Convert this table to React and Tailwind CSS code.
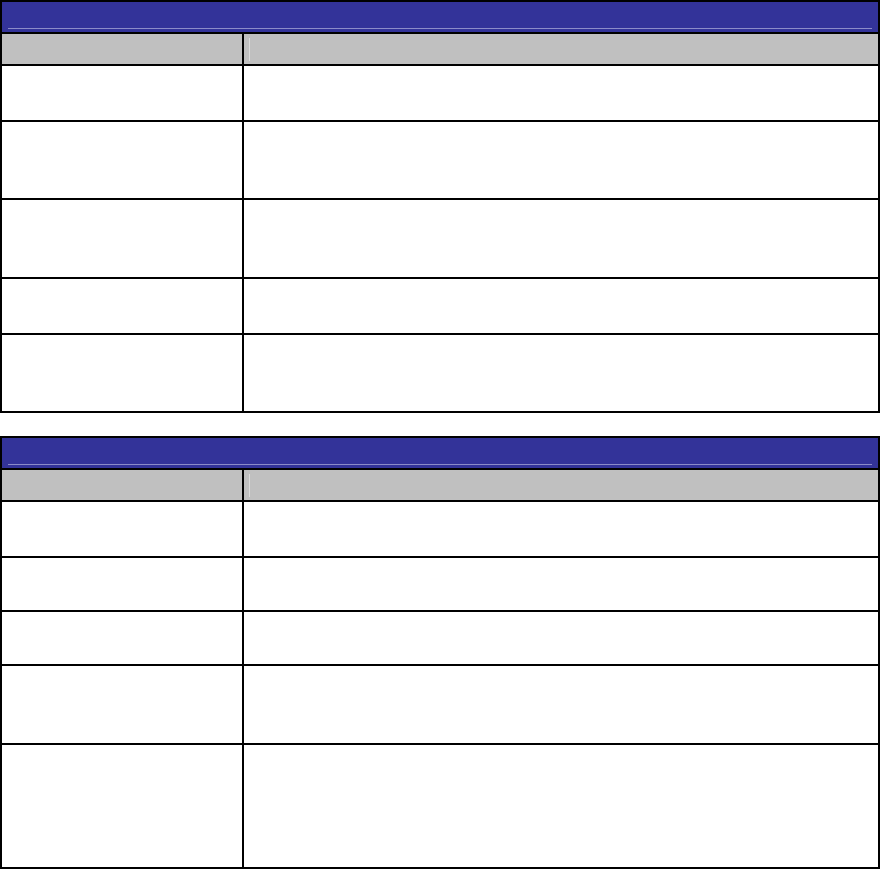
const tables = [
  { rows: [54, 76, 77, 54, 76] },
  { rows: [54, 52, 52, 77, 122] },
];

const Table = ({ rows }) => (
  <div className="border-2 border-black bg-white">
    {/* barra de título */}
    <div className="h-[30px] bg-[#333399] flex flex-col justify-end pb-[3px] px-[6px]">
      <div className="h-px bg-[#8c8cc8]" />
    </div>
    {/* cabecera de columnas */}
    <div className="flex h-[32px] border-t-2 border-black bg-[#c0c0c0]">
      <div className="w-[242px] border-r-2 border-black" />
      <div className="flex-1 flex items-center pl-[5px]">
        <div className="w-px h-[23px] bg-[#dcdcdc]" />
      </div>
    </div>
    {rows.map((h, i) => (
      <div key={i} className="flex border-t-2 border-black" style={{ height: h + 2 }}>
        <div className="w-[242px] border-r-2 border-black" />
        <div className="flex-1" />
      </div>
    ))}
  </div>
);

export default function App() {
  return (
    <div className="w-[880px] h-[870px] bg-white flex flex-col gap-[23px] font-['Liberation_Sans',sans-serif]">
      {tables.map((t, i) => (
        <Table key={i} rows={t.rows} />
      ))}
    </div>
  );
}
